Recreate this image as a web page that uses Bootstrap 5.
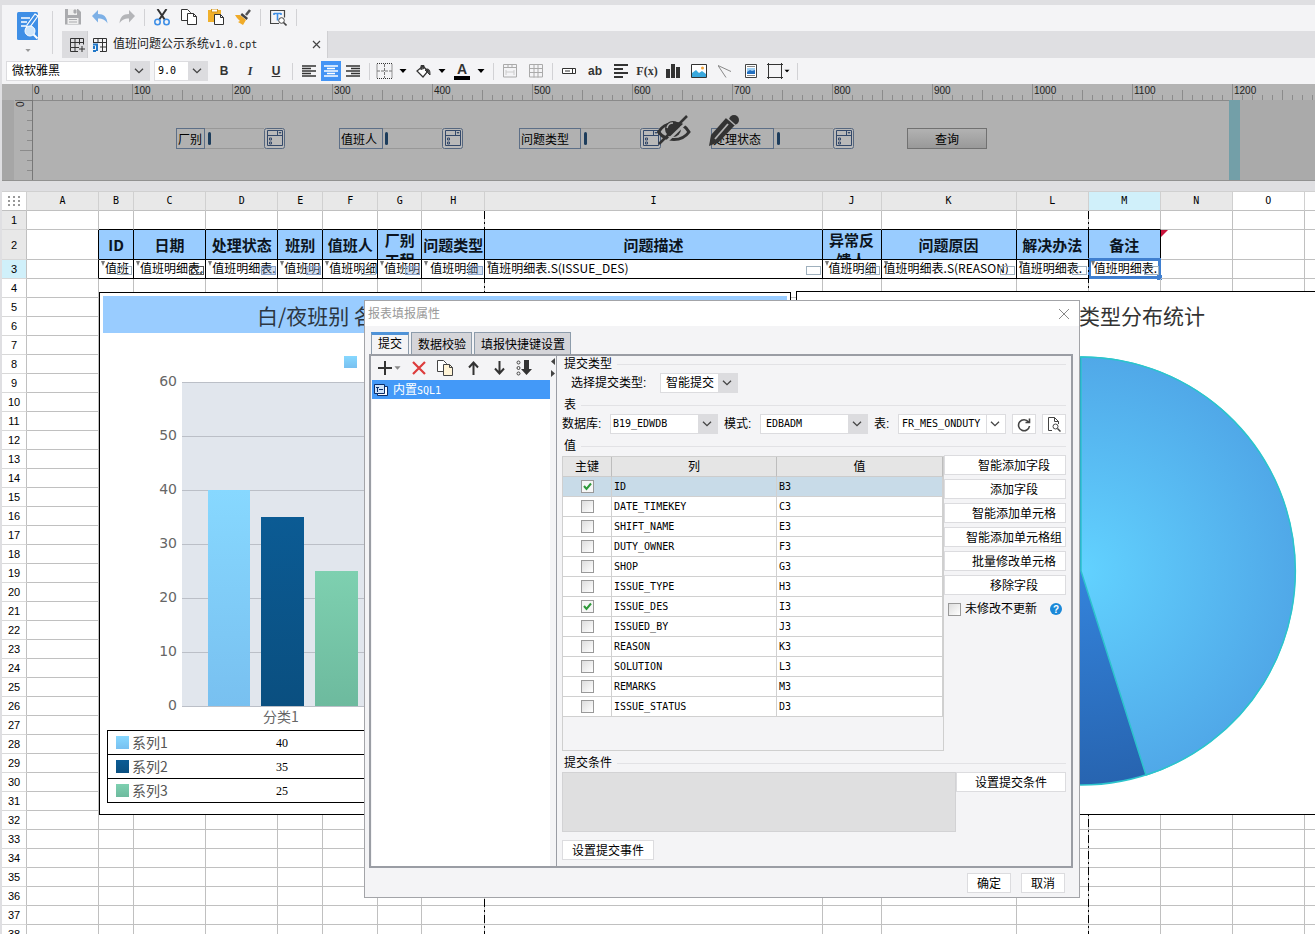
<!DOCTYPE html>
<html lang="zh-CN">
<head>
<meta charset="utf-8">
<meta name="viewport" content="width=device-width, initial-scale=1">
<title>值班问题公示系统v1.0.cpt</title>
<link href="https://cdn.jsdelivr.net/npm/bootstrap@5.3.0/dist/css/bootstrap.min.css" rel="stylesheet">
<style>
:root{--face:#f4f4f6;--edge:#dcdcdf;--grid:#c0c0c0;--blue:#4394f5;
 --mono:"DejaVu Sans Mono","Noto Sans CJK SC",monospace;--ui:"Liberation Sans","Noto Sans CJK SC",sans-serif}
html,body{height:100%;overflow:hidden}
body{font:12px/16px var(--ui);color:#000;background:#dfdfe2}
svg{display:block;flex:none}
button,select,input{font:inherit;color:inherit;border-radius:0}
button{background:none;border:0;padding:0}
.m10{font-family:var(--mono);font-size:10px}
.app{padding:5px 0 0 2px}
.appbar{background:var(--face)}
.logo{width:51px;padding-top:7px}
.logo:after{content:"";position:absolute;right:0;top:6px;bottom:4px;width:1px;background:#d4d4d7}
.quick{height:26px;gap:11px;padding:0 0 2px 12px}
.rule-v{width:1px;height:17px;background:#d2d2d5;flex:none}
.quick .rule-v{margin:0 -2px}
.tabsrow{height:27px;margin-left:9px;background:#dfdfe2}
.newtab{width:26px;border-right:1px solid #cfcfd2;background:#dcdcdf}
.doctab{width:240px;gap:6px;padding:0 6px 0 5px;background:var(--face);border-right:1px solid #cfcfd2;color:#222}
.fmt{height:26px;gap:6px;padding-left:4px;background:var(--face)}
.tool{width:20px;height:20px;display:flex;align-items:center;justify-content:center;color:#333;flex:none}
.tool.on{background:var(--blue);color:#fff}
.split{width:33px;height:20px;display:flex;align-items:center;gap:6px;color:#333;flex:none}
.combo{appearance:none;height:20px;border:1px solid var(--edge);padding:0 22px 0 5px;line-height:16px;outline:0;
 background:url("data:image/svg+xml,%3Csvg xmlns='http://www.w3.org/2000/svg' width='10' height='6'%3E%3Cpath d='M1 .7l4 4 4-4' fill='none' stroke='%23444' stroke-width='1.3'/%3E%3C/svg%3E") no-repeat right 5px center,linear-gradient(#dcdcdf,#dcdcdf) no-repeat right/19px 100%,#fff}
.combo.plain{background-size:auto,1px 100%;background-position:right 5px center,right 18px top}
.ruler{height:16px;background:#b4b4b4}
.canvas{height:81px;background:#b1b1b1;border-bottom:1px solid #929292}
.canvas .guide{left:1227px;width:11px;top:0;bottom:0;background:#739fa8}
.canvas .rest{left:1238px;right:0;top:0;bottom:0;background:#aaa}
.field{position:absolute;top:28px;height:21px;display:flex}
.field label{border:1px solid #5d6f87;padding:3px 0 0 1px;white-space:nowrap;overflow:hidden}
.field input{border:1px solid #989898;border-width:1px 0;background:none;width:59px;outline:0}
.field i{position:absolute;top:4px;width:3px;height:13px;border-radius:2px;background:#1d3d5c}
.field.f1{left:174px}.field.f2{left:337px}.field.f3{left:517px}.field.f4{left:709px}
.f1 label{width:29px}.f2 label{width:44px}.f3 label{width:62px}.f4 label{width:63px}
.f1 i{left:32px}.f2 i{left:46px}.f3 i{left:65px}.f4 i{left:66px}
.query{position:absolute;left:905px;top:28px;width:80px;height:21px;padding-top:2px;border:1px solid #717171;background:linear-gradient(#b2b2b2,#999)}
.sheet{margin-top:10px;background:#fff}
.cells{table-layout:fixed;width:1374px;border-collapse:separate;border-spacing:0}
.cells th,.cells td{border:solid var(--grid);border-width:0 1px 1px 0;padding:0;height:19px;line-height:18px;text-align:center;font-weight:400;overflow:hidden;white-space:nowrap;position:relative}
.cells thead th{height:20px;background:#e8e8e8;border-color:#d0d0d0 #d0d0d0 #c0c0c0;border-top-width:1px;font:10px/18px "DejaVu Sans Mono",monospace}
.cells tbody th{font-size:11px;font-family:"Liberation Sans",sans-serif;border-bottom-color:#d8d8d8}
.cells .dim{background:#e8e8e8}
.cells thead .blank{background:#fff}
.cells thead .hot,.cells tbody .hot{background:#d0f0fa}
.cells .kb{border-bottom-color:#000}.cells .kr{border-right-color:#000}
.cells .cap{height:30px;padding:0;background:#9cf;font:bold 15px/29px "Noto Sans CJK SC",sans-serif;color:#0c1420;border-color:#000}
.cap div{height:29px;overflow:hidden}
.cap .two{line-height:20px}
.cells .bind{border-color:#000;text-align:left;padding-left:6px;line-height:16px;vertical-align:top;font-family:"Noto Sans CJK SC",sans-serif}
.cells .bind.tight{padding-left:2px}
.cells .bind.wide{padding-left:8px}
.bind:before{content:"";position:absolute;left:2px;top:1px;border:solid transparent;border-width:5px 2px 0;border-top-color:#777}
.bind:after{content:"";position:absolute;right:1px;bottom:3px;width:15px;height:9px;border:1px solid #9fb0bd}
.bind.drop:after{background:#7f9fd055;border-color:#8aa4cc}
.bind.date:after{border-color:#555;background:repeating-linear-gradient(90deg,#666 0 2px,transparent 2px 4px) 2px 5px/10px 2px no-repeat}
.cells .flag{overflow:visible}
.flag:before{content:"";position:absolute;left:0;top:0;border:solid transparent;border-width:0 7px 7px 0;border-top:7px solid #c8143c;border-bottom:0}
.cells .picked{overflow:visible;padding-left:5px}
.pick{position:absolute;left:-1px;right:-1px;top:-2px;bottom:-1px;border:3px solid #3f7fd0}
.pick:after{content:"";position:absolute;right:-4px;bottom:-4px;width:5px;height:5px;background:#3f7fd0}
.pagebrk{position:absolute;top:20px;bottom:0;width:1px;background:repeating-linear-gradient(#000 0 8px,transparent 8px 11px,#000 11px 13px,transparent 13px 16px)}
.brk1{left:482px}.brk2{left:1086px}
.chart{position:absolute;background:#fff;border:1px solid #000;padding:3px}
.chart1{left:97px;top:101px;width:692px;height:523px}
.chart2{left:794px;top:100px;width:650px;height:524px}
.ctitle{font:21px/37px "Noto Sans CJK SC",sans-serif;height:37px;color:#333}
.chart1 .ctitle{background:#9cf;padding:1px 0 0 154px;color:#2b3642}
.chart2 .ctitle{text-align:center;padding-top:2px}
.series{width:calc(100% - 8px);margin:0 4px;border-collapse:collapse;table-layout:fixed}
.series td,.series th{height:24px;border:solid #000;border-width:1px 0;padding:0}
.series tr>:first-child{border-left-width:1px}
.series th{width:148px;padding:0 0 2px 8px;font:14px/20px "Noto Sans CJK SC",sans-serif;color:#555}
.series .num{font:12px/20px "Liberation Serif",serif;width:53px;text-align:center}
.swatch{width:13px;height:13px;margin:2px 3px 0 0}
.dlg{position:absolute;left:364px;top:300px;width:716px;height:598px;background:var(--face);border:1px solid #a3a4a8}
.dlghead{height:25px;background:#fff;color:#999;padding:0 9px 0 3px}
.dlgtabs{height:22px;margin:6px 0 0 6px;gap:2px}
.dlgtabs button{border:1px solid #8d9cab;border-bottom:0;background:#d5d5d9;padding:3px 5px 0 6px}
.dlgtabs .on{background:var(--face);border-top:3px solid #4f93d8;padding:0 6px 2px}
.pane{margin:0 6px 0 4px;height:514px;border:2px solid #9a9da4}
.side{width:179px}
.sidebar-tools{height:24px;gap:11px;padding-left:7px}
.src{background:#fff;border-left:1px solid var(--face)}
.src a{display:flex;align-items:center;gap:5px;height:19px;padding:1px 0 0 2px;background:#4399f8;color:#fff;text-decoration:none}
.splitter{width:7px;border-right:1px solid #9a9da4}
.form{padding:0 5px 0 5px}
.grp{height:16px;margin:4px 0 1px;gap:5px;padding-left:2px}
.grp:first-child{margin-top:0}
.grp:after{content:"";flex:1;height:1px;background:#e2e2e5}
.line{height:20px}
.wbtn{height:20px;border:1px solid var(--edge);padding-top:1px;background:#fff;white-space:nowrap}
.fieldbox{width:382px;height:295px;margin-top:1px;border:1px solid #cfcfcf}
.fieldbox table{width:100%;table-layout:fixed;border-collapse:separate;border-spacing:0}
.fieldbox th{height:20px;background:#e5e5e5;font-weight:400;text-align:center;border-right:1px solid #bdbdbd;border-bottom:1px solid #ccc;padding:0}
.fieldbox td{height:20px;background:#fff;border:solid #d0d0d0;border-width:0 1px 1px 0;padding:0 0 0 2px;line-height:16px}
.fieldbox .cur td{background:#c8dbe8}
.tick{appearance:none;display:block;width:13px;height:13px;margin:0;border:1px solid #999;background:linear-gradient(135deg,#ddd,#fff);flex:none}
td .tick{margin-left:16px}
.tick:checked{background:url("data:image/svg+xml,%3Csvg xmlns='http://www.w3.org/2000/svg' width='11' height='11'%3E%3Cpath d='M2 5l2.500 3L9 2.500' fill='none' stroke='%232f9a3a' stroke-width='2'/%3E%3C/svg%3E") center no-repeat,#f6f6f6}
.acts{width:122px;gap:4px}
.acts .wbtn{padding-left:18px}
.cond{height:60px}
.cond textarea{flex:1;background:#dfdfe0;border:1px solid #d2d2d4;resize:none;display:block}
</style>
</head>
<body class="d-flex flex-column">
<svg width="0" height="0" class="position-absolute">
 <symbol id="car" viewBox="0 0 8 4"><path d="M.5 0h7L4 4z"/></symbol>
 <symbol id="widget" viewBox="0 0 21 21"><rect x=".5" y=".5" width="20" height="20" rx="2" fill="#b9b9b9" stroke="#56677f"/><path d="M3.500 2.500h15v15h-15zM3.500 7.500h15M13.500 2.500v5M5.500 10h2v2h-2zM5.500 14h2v2h-2z" fill="none" stroke="#34496a"/><path d="M14.500 4h3l-1.500 2z" fill="#34496a"/></symbol>
</svg>
<div class="app d-flex flex-column flex-grow-1 position-relative">
 <header class="appbar d-flex">
  <button class="logo position-relative d-flex flex-column align-items-center" aria-label="FineReport">
   <svg width="24" height="29" viewBox="0 0 24 29"><rect x="1" y="0" width="21" height="28" rx="1.500" fill="#3f8fe6"/><path d="M5 6h9M5 10h6M5 14h5" stroke="#fff" stroke-width="1.500"/><path d="M19 2l3 2-8 11-4 2 1-4z" fill="#3f8fe6" stroke="#fff" stroke-width="1.200"/><circle cx="14" cy="19" r="5" fill="#cfe6fb" stroke="#fff"/><path d="M17.500 22.500l4 4" stroke="#fff" stroke-width="2"/></svg>
   <svg width="6" height="8" viewBox="0 -4 8 8" class="mt-1" fill="#999"><path d="M.5 0h7L4 4z"/></svg>
  </button>
  <div class="flex-grow-1">
   <div class="quick d-flex align-items-center">
    <button aria-label="保存"><svg width="16" height="16" viewBox="0 0 16 16"><path d="M0 0h13l3 3v12.500H0z" fill="#aaabae"/><path d="M3 0h9v6H3zM2.500 9h11v6h-11z" fill="#eee"/><path d="M9 1h2v3H9zM4 10.500h8M4 13h8" fill="#aaabae" stroke="#aaabae"/></svg></button>
    <button aria-label="撤销"><svg width="16" height="16" viewBox="0 0 16 16"><path d="M6 1v4c6 0 9 3 9.500 9.500C13.500 11 11 9.500 6 9.500v4L0 7z" fill="#7db0e6"/></svg></button>
    <button aria-label="重做"><svg width="16" height="16" viewBox="0 0 16 16"><path d="M10 1v4C4 5 1 8 .5 14.500 2.500 11 5 9.500 10 9.500v4L16 7z" fill="#b4b5b8"/></svg></button>
    <span class="rule-v"></span>
    <button aria-label="剪切"><svg width="16" height="17" viewBox="0 0 16 17"><path d="M3.500 0l7.500 11M12.500 0L5 11" stroke="#333" stroke-width="2"/><circle cx="3.500" cy="13" r="2.700" fill="none" stroke="#3f8fe6" stroke-width="1.600"/><circle cx="12.500" cy="13" r="2.700" fill="none" stroke="#3f8fe6" stroke-width="1.600"/></svg></button>
    <button aria-label="复制"><svg width="16" height="16" viewBox="0 0 16 16" fill="#fff" stroke="#333"><path d="M.5.5h6l3 3v8h-9z"/><path d="M6.500 4.500h6l3 3v8h-9z"/><path d="M12.500 4.500v3h3" fill="none"/></svg></button>
    <button aria-label="粘贴"><svg width="16" height="16" viewBox="0 0 16 16"><path d="M0 1h13v12H0z" fill="#f0b02c"/><path d="M3.500 0h6v3h-6z" fill="#fff" stroke="#d2951c"/><path d="M6.500 5.500h6l3 3v7h-9z" fill="#fff" stroke="#333"/><path d="M12.500 5.500v3h3" fill="none" stroke="#333"/></svg></button>
    <button aria-label="格式刷"><svg width="16" height="16" viewBox="0 0 16 16"><path d="M15 1l-4 5" stroke="#555" stroke-width="2.500"/><path d="M7 4l6 5-1.500 2-6-5z" fill="#444"/><path d="M0 6h5l6 5-3 5-5-3 2-1-3-3z" fill="#f0ab28"/></svg></button>
    <span class="rule-v"></span>
    <button aria-label="预览"><svg width="17" height="17" viewBox="0 0 17 17" fill="none"><path d="M9 14.500H.5v-13h14v7" stroke="#444" stroke-width="1.200"/><path d="M4 4.500h7M7.500 4.500v7M4 4v2M11 4v2" stroke="#3f8fe6" stroke-width="1.600"/><circle cx="11.500" cy="11.500" r="2.800" fill="#fff" stroke="#444"/><path d="M13.500 13.500l3 3" stroke="#444" stroke-width="1.600"/></svg></button>
    <span class="rule-v"></span>
   </div>
   <nav class="tabsrow d-flex">
    <button class="newtab d-flex align-items-center justify-content-end" style="padding-right:2px" aria-label="新建"><svg width="15" height="14" viewBox="0 0 15 14" fill="none" stroke="#333"><path d="M9 9.500H.5v-9h13v6M.5 4.500h13M5 .5v13M9.500.5v6M.5 9.500v4H8M12 8v6M9 11h6"/></svg></button>
    <div class="doctab d-flex align-items-center">
     <svg width="14" height="14" viewBox="0 0 14 14" fill="none" stroke="#333"><path d="M.5 5V.5h13v13H7M.5 4.500h13M5 .5v4M9.500.5v13M7 9h7"/><path d="M0 6.500h5M4 6v7M0 13h3M1 8v3" stroke="#2278c8" stroke-width="2"/></svg>
     <a href="#" class="text-reset text-decoration-none text-nowrap">值班问题公示系统<span class="m10">v1.0.cpt</span></a>
     <button class="ms-auto" aria-label="关闭标签"><svg width="9" height="9" viewBox="0 0 9 9"><path d="M1 1l7 7M8 1L1 8" stroke="#444" stroke-width="1.200"/></svg></button>
    </div>
   </nav>
  </div>
 </header>
 <div class="fmt d-flex align-items-center" role="toolbar" aria-label="格式">
  <div class="d-flex gap-1">
   <select class="combo" style="width:144px" aria-label="字体"><option>微软雅黑</option></select>
   <select class="combo m10" style="width:54px;padding-left:3px" aria-label="字号"><option>9.0</option></select>
  </div>
  <button class="tool fw-bold">B</button>
  <button class="tool fst-italic fw-bold" style="font-family:Liberation Serif">I</button>
  <button class="tool fw-bold text-decoration-underline">U</button>
  <span class="rule-v"></span>
  <div class="d-flex" style="gap:2px">
   <button class="tool" aria-label="左对齐"><svg width="14" height="12"><path d="M0 1h14M0 3.500h9M0 6h14M0 8.500h9M0 11h14" stroke="currentColor" stroke-width="1.300"/></svg></button>
   <button class="tool on" aria-label="居中"><svg width="14" height="12"><path d="M0 1h14M3 3.500h8M0 6h14M3 8.500h8M0 11h14" stroke="currentColor" stroke-width="1.300"/></svg></button>
   <button class="tool" aria-label="右对齐"><svg width="14" height="12"><path d="M0 1h14M5 3.500h9M0 6h14M5 8.500h9M0 11h14" stroke="currentColor" stroke-width="1.300"/></svg></button>
  </div>
  <span class="rule-v"></span>
  <button class="split" aria-label="边框"><svg width="17" height="16" fill="none" stroke="#333"><path d="M1 .5h15v15H1z" stroke-dasharray="1 1"/><path d="M8.500 1v14M1 8h15" stroke-dasharray="3 1" stroke="#777"/></svg><svg width="8" height="4"><use href="#car"/></svg></button>
  <button class="split" aria-label="背景色"><svg width="17" height="14" viewBox="0 0 17 14"><path d="M2 7l6-5 5 5-5 6z" fill="#fff" stroke="#333" stroke-width="1.200"/><path d="M6 6V1.500h3V5M12 5c3 0 3 3 3 6-2-2-3-3-5-5z" fill="#333" stroke="#333" fill-opacity=".8"/></svg><svg width="8" height="4"><use href="#car"/></svg></button>
  <button class="split" aria-label="字体颜色"><svg width="17" height="17"><text x="8" y="11" text-anchor="middle" font-family="Liberation Sans" font-weight="bold" font-size="14" fill="#333">A</text><path d="M0 13h16v4H0z"/></svg><svg width="8" height="4"><use href="#car"/></svg></button>
  <span class="rule-v"></span>
  <button class="tool" aria-label="合并"><svg width="14" height="14" fill="none" stroke="#aaa"><path d="M.5.5h13v12.500H.5zM.5 3.500h13M5 .5v3M9 .5v3"/><path d="M3 8h8M3 6v5M11 6v5" stroke="#ccc"/></svg></button>
  <button class="tool" aria-label="拆分"><svg width="14" height="14" fill="none" stroke="#aaa"><path d="M.5.5h13v12.500H.5zM.5 4.500h13M.5 8.500h13M5 .5v13M9 .5v13"/></svg></button>
  <span class="rule-v"></span>
  <button class="tool" aria-label="控件"><svg width="14" height="6" fill="#fff" stroke="#333"><path d="M.5.5h13v5H.5z"/><path d="M3 3h5M10.500 1v4"/></svg></button>
  <button class="tool fw-bold">ab</button>
  <button class="tool" aria-label="段落"><svg width="14" height="14"><path d="M0 1h14M0 5h9M0 9h14M0 13h9" stroke="#333" stroke-width="1.800"/></svg></button>
  <button class="tool" style="font:bold 12px Liberation Serif">F(x)</button>
  <button class="tool" aria-label="图表"><svg width="14" height="14" fill="#333"><path d="M0 5h4v9H0zM5 0h4v14H5zM10 3h4v11h-4z"/></svg></button>
  <button class="tool" aria-label="图片"><svg width="16" height="14"><path d="M.5.5h15v13H.5z" fill="#fff" stroke="#333"/><path d="M1 13V9l4-3 3 3 3-2 4 3v3z" fill="#3aa8dc"/><circle cx="11.500" cy="4" r="1.500" fill="#f2a33a"/></svg></button>
  <button class="tool" aria-label="斜线"><svg width="14" height="13" fill="none" stroke="#888"><path d="M0 .5l13 6M0 .5l8 12"/></svg></button>
  <button class="tool" aria-label="子报表"><svg width="12" height="14"><path d="M.5.5h11v13H.5z" fill="#fff" stroke="#444"/><path d="M2 2.500h8M2 11.500h8" stroke="#888"/><path d="M2 4h8v6H2z" fill="#9fd0f5"/><path d="M2 10V8l3-2 2 1 3-1v4z" fill="#2470c0"/></svg></button>
  <button class="split" aria-label="悬浮元素" style="gap:1px;width:24px"><svg width="16" height="16" fill="none" stroke="#333"><path d="M0 1.500h16M0 14.500h16M1.500 0v16M14.500 0v16"/></svg><svg width="6" height="4" viewBox="0 0 8 4"><use href="#car"/></svg></button>
  <span class="rule-v"></span>
 </div>
 <svg class="ruler w-100" height="16" id="ruler" font-family="Liberation Sans" font-size="10" fill="#222">
  <defs><pattern id="ticks" x="30" width="100" height="16" patternUnits="userSpaceOnUse"><path d="M.5 0v16M50.500 6v10M10.500 11v5M20.500 11v5M30.500 11v5M40.500 11v5M60.500 11v5M70.500 11v5M80.500 11v5M90.500 11v5" stroke="#8b8b8b"/></pattern></defs>
  <rect width="100%" height="16" fill="#b3b3b3"/><rect x="30" width="100%" height="16" fill="url(#ticks)"/>
 </svg>
 <div class="canvas position-relative">
  <svg width="31" height="80" stroke="#8b8b8b" fill="none"><path d="M0 0h12v80H0z" fill="#a6a6a6" stroke="none"/><path d="M13 .5h18M30.500 0v80" stroke="#777"/><path d="M25 10.500h5M25 20.500h5M25 30.500h5M25 40.500h5M18 50.500h12M25 60.500h5M25 70.500h5"/><text transform="translate(22 7) rotate(-90)" font-size="10" font-family="Liberation Sans" fill="#222" stroke="none">0</text></svg>
  <svg class="position-absolute top-0" style="left:31px" width="1198" height="1"><path d="M0 .5h1198" stroke="#8a8a8a"/></svg>
  <div class="field f1"><label for="w1">厂别</label><input id="w1"><i></i><svg width="21" height="21"><use href="#widget"/></svg></div>
  <div class="field f2"><label for="w2">值班人</label><input id="w2"><i></i><svg width="21" height="21"><use href="#widget"/></svg></div>
  <div class="field f3"><label for="w3">问题类型</label><input id="w3"><i></i><svg width="21" height="21"><use href="#widget"/></svg></div>
  <div class="field f4"><label for="w4">处理状态</label><input id="w4"><i></i><svg width="21" height="21"><use href="#widget"/></svg></div>
  <svg class="position-absolute" style="left:655px;top:14px" width="84" height="34" viewBox="0 0 84 34"><path d="M1.500 18C8 7 25 6 32 18 25 28 9 28 1.500 18z" fill="none" stroke="#333" stroke-width="3"/><circle cx="16" cy="15" r="8" fill="#333"/><path d="M10 14q1-5 6-5" stroke="#b1b1b1" stroke-width="1.500" fill="none"/><path d="M5 32L33 5" stroke="#b1b1b1" stroke-width="2.500"/><path d="M2 30L30 2" stroke="#333" stroke-width="2.500"/>
  <path d="M52 32l2-11L69 4l9 7-16 17z" fill="#333"/><circle cx="77" cy="6" r="5" fill="#333"/><path d="M69 3l9 8" stroke="#b1b1b1" stroke-width="1.500"/><path d="M58 25L71 10" stroke="#b1b1b1" stroke-width="1.800"/></svg>
  <button class="query">查询</button>
  <div class="guide position-absolute"></div><div class="rest position-absolute"></div>
 </div>
 <main class="sheet flex-grow-1 position-relative overflow-hidden">
  <table class="cells" id="cells"></table>
  <div class="pagebrk brk1"></div><div class="pagebrk brk2"></div>
  <section class="chart chart1">
   <div class="ctitle">白/夜班别 各</div>
   <svg width="684" height="397" viewBox="103 333 684 397" font-family="DejaVu Sans" font-size="14" fill="#666">
    <defs><linearGradient id="g1" x2="0" y2="1"><stop stop-color="#87d8ff"/><stop offset="1" stop-color="#78c0f0"/></linearGradient><linearGradient id="g2" x2="0" y2="1"><stop stop-color="#0b5b94"/><stop offset="1" stop-color="#0a4f80"/></linearGradient><linearGradient id="g3" x2="0" y2="1"><stop stop-color="#7ed0b0"/><stop offset="1" stop-color="#6dba9e"/></linearGradient></defs>
    <rect x="344" y="356" width="13" height="12" fill="url(#g1)"/>
    <rect x="182" y="382" width="590" height="324" fill="#e1e6ed"/>
    <path d="M182 382.500h590M182 436.500h590M182 490.500h590M182 544.500h590M182 598.500h590M182 652.500h590M182 706.500h590" stroke="#bbbfc7"/>
    <g text-anchor="end"><text x="177" y="386">60</text><text x="177" y="440">50</text><text x="177" y="494">40</text><text x="177" y="548">30</text><text x="177" y="602">20</text><text x="177" y="656">10</text><text x="177" y="710">0</text></g>
    <rect x="208" y="490" width="42" height="216" fill="url(#g1)"/><rect x="261" y="517" width="43" height="189" fill="url(#g2)"/><rect x="315" y="571" width="43" height="135" fill="url(#g3)"/>
    <text x="281" y="722" text-anchor="middle" font-family="Noto Sans CJK SC">分类1</text>
   </svg>
   <table class="series">
    <tr><th><span class="d-flex align-items-center"><svg class="swatch"><rect width="13" height="13" fill="url(#g1)"/></svg>系列1</span></th><td class="num">40</td><td></td></tr>
    <tr><th><span class="d-flex align-items-center"><svg class="swatch"><rect width="13" height="13" fill="url(#g2)"/></svg>系列2</span></th><td class="num">35</td><td></td></tr>
    <tr><th><span class="d-flex align-items-center"><svg class="swatch"><rect width="13" height="13" fill="url(#g3)"/></svg>系列3</span></th><td class="num">25</td><td></td></tr>
   </table>
  </section>
  <section class="chart chart2">
   <div class="ctitle">问题类型分布统计</div>
   <svg width="600" height="470" viewBox="800 332 600 470">
    <defs><radialGradient id="p1" gradientUnits="userSpaceOnUse" cx="1081" cy="571" r="215"><stop stop-color="#62d2ff"/><stop offset="1" stop-color="#50a8e8"/></radialGradient><radialGradient id="p2" gradientUnits="userSpaceOnUse" cx="1081" cy="571" r="215"><stop stop-color="#3484dc"/><stop offset="1" stop-color="#2764b0"/></radialGradient></defs>
    <g stroke="#2cc4cc" stroke-width="1.500"><circle cx="1081" cy="571" r="214" fill="url(#p2)"/><path d="M1081 571V357a214 214 0 0 1 65 418z" fill="url(#p1)"/></g>
   </svg>
  </section>
 </main>

 <section class="dlg" role="dialog" aria-label="报表填报属性">
  <div class="dlghead d-flex align-items-center justify-content-between">报表填报属性<button aria-label="关闭"><svg width="12" height="12"><path d="M1 1l10 10M11 1L1 11" stroke="#888"/></svg></button></div>
  <nav class="dlgtabs d-flex"><button class="on">提交</button><button>数据校验</button><button>填报快捷键设置</button></nav>
  <div class="pane d-flex">
   <div class="side d-flex flex-column">
    <div class="sidebar-tools d-flex align-items-center">
     <button class="d-flex align-items-center" aria-label="添加"><svg width="14" height="14"><path d="M0 7h14M7 0v14" stroke="#333" stroke-width="2"/></svg><svg style="margin-left:2px" width="7" height="4" viewBox="0 0 8 4"><path d="M.5 0h7L4 4z" fill="#888"/></svg></button>
     <button aria-label="删除"><svg width="14" height="14"><path d="M1 1l12 12M13 1L1 13" stroke="#dd3c3c" stroke-width="2.200"/></svg></button>
     <button aria-label="复制"><svg width="16" height="16" stroke="#444"><path d="M.5.5h6l3 3v8h-9z" fill="#fff"/><path d="M6.500 4.500h6l3 3v8h-9z" fill="#fff4d6"/><path d="M12.500 4.500v3h3" fill="none"/></svg></button>
     <button class="ps-1" aria-label="上移"><svg width="11" height="14" fill="none" stroke="#333" stroke-width="2"><path d="M5.500 14V2M1 6.500l4.500-5 4.500 5"/></svg></button>
     <button class="ps-1" aria-label="下移"><svg width="11" height="14" fill="none" stroke="#333" stroke-width="2"><path d="M5.500 0v12M1 7.500l4.500 5 4.500-5"/></svg></button>
     <button aria-label="排序"><svg width="16" height="16"><g fill="none" stroke="#444"><circle cx="2.500" cy="2.500" r="1.500"/><circle cx="2.500" cy="8" r="1.500"/><circle cx="2.500" cy="13.500" r="1.500"/></g><path d="M8 0h5v9h3l-5.500 6L5 9h3z" fill="#333"/></svg></button>
    </div>
    <div class="src flex-grow-1"><a href="#"><svg width="14" height="12"><path d="M3.500 2.500h10v9h-10z" fill="#fff" stroke="#0b2e6b"/><path d="M.5.500h10v9H.5z" fill="#cfe4fb" stroke="#0b2e6b"/><path d="M2 3.500h3M3.500 3v5M5 5.500h4" stroke="#0b2e6b"/></svg><span>内置<span class="m10">SQL1</span></span></a></div>
   </div>
   <div class="splitter"><svg width="6" height="22" fill="#444"><path d="M5 2v7L1 5.500zM1 14v7l4-3.500z"/></svg></div>
   <div class="form flex-grow-1">
    <div class="grp d-flex align-items-center">提交类型</div>
    <div class="line d-flex align-items-center" style="padding-left:9px"><label for="st" style="width:89px">选择提交类型:</label><select id="st" class="combo" style="width:78px"><option>智能提交</option></select></div>
    <div class="grp d-flex align-items-center">表</div>
    <div class="line d-flex align-items-center">
     <label for="db" style="width:48px">数据库:</label><select id="db" class="combo m10" style="width:108px;padding-left:2px"><option>B19_EDWDB</option></select>
     <label for="sc" style="width:42px;padding-left:6px">模式:</label><select id="sc" class="combo m10" style="width:108px"><option>EDBADM</option></select>
     <label for="tb" style="width:30px;padding-left:6px">表:</label><select id="tb" class="combo plain m10" style="width:108px;padding-left:3px"><option>FR_MES_ONDUTY</option></select>
     <button class="wbtn ms-auto d-flex align-items-center justify-content-center" style="width:24px" aria-label="刷新"><svg width="14" height="14" fill="none" stroke="#444" stroke-width="1.600"><path d="M11.500 4A5.500 5.500 0 1 0 12.500 8M12.500 .5v4h-4"/></svg></button>
     <button class="wbtn ms-auto d-flex align-items-center justify-content-center" style="width:24px" aria-label="预览数据"><svg width="14" height="15" fill="none" stroke="#444"><path d="M5 13.500H1.500v-13h6l4 4V7M7.500.5v4h4"/><circle cx="8.500" cy="9.500" r="2.500"/><path d="M10.500 11.500l3 3" stroke-width="1.500"/></svg></button>
    </div>
    <div class="grp d-flex align-items-center">值</div>
    <div class="d-flex justify-content-between">
     <div class="fieldbox"><table><colgroup><col style="width:49px"><col style="width:165px"><col></colgroup><thead><tr><th>主键</th><th>列</th><th>值</th></tr></thead><tbody id="fields"></tbody></table></div>
     <div class="acts d-flex flex-column">
      <button class="wbtn">智能添加字段</button><button class="wbtn">添加字段</button><button class="wbtn">智能添加单元格</button><button class="wbtn">智能添加单元格组</button><button class="wbtn">批量修改单元格</button><button class="wbtn">移除字段</button>
      <div class="line d-flex align-items-center ps-1"><input class="tick" type="checkbox" id="keep"><label class="ps-1" for="keep">未修改不更新</label><button class="ms-auto me-1" aria-label="帮助"><svg width="12" height="12"><circle cx="6" cy="6" r="6" fill="#1b88d8"/><text x="6" y="10" text-anchor="middle" font-family="Liberation Sans" font-weight="bold" font-size="10" fill="#fff">?</text></svg></button></div>
     </div>
    </div>
    <div class="grp d-flex align-items-center">提交条件</div>
    <div class="cond d-flex align-items-start"><textarea class="h-100" readonly aria-label="提交条件"></textarea><button class="wbtn" style="width:110px">设置提交条件</button></div>
    <button class="wbtn mt-2 d-block" style="width:92px">设置提交事件</button>
   </div>
  </div>
  <div class="d-flex justify-content-end" style="padding:5px 14px 0;gap:10px"><button class="wbtn" style="width:44px">确定</button><button class="wbtn" style="width:44px">取消</button></div>
 </section>
</div>
<script src="https://cdn.jsdelivr.net/npm/bootstrap@5.3.0/dist/js/bootstrap.bundle.min.js"></script>
<script>
// Ruler labels every 100 units
const ruler = document.getElementById('ruler');
for (let v = 0; v <= 1200; v += 100)
  ruler.insertAdjacentHTML('beforeend', `<text x="${v + 32}" y="10">${v}</text>`);

// Spreadsheet grid
const widths = [72,35,72,72,45,55,44,63,337,59,135,72,72,72,72,71];
const caps = {B:'ID',C:'日期',D:'处理状态',E:'班别',F:'值班人',G:'厂别<br>工程',H:'问题类型',I:'问题描述',J:'异常反<br>馈人',K:'问题原因',L:'解决办法',M:'备注'};
const binds = {B:['值班',''],C:['值班明细表.','date'],D:['值班明细表.','drop'],E:['值班明','drop'],F:['值班明细',''],G:['值班明','drop'],H:['值班明细','drop wide'],I:['值班明细表.S(ISSUE_DES)','tight'],J:['值班明细',''],K:['值班明细表.S(REASON)','tight'],L:['值班明细表.','tight'],M:['值班明细表.','picked']};
const cols = [...'ABCDEFGHIJKLMNOP'];
let html = '<colgroup><col style="width:25px">' + widths.map(w => `<col style="width:${w}px">`).join('') + '</colgroup>';
html += '<thead><tr><th class="blank"><svg class="m-auto" width="12" height="11" fill="#999"><path d="M0 0h2v2H0zM5 0h2v2H5zM10 0h2v2h-2zM0 4h2v2H0zM5 4h2v2H5zM10 4h2v2h-2zM0 8h2v2H0zM5 8h2v2H5zM10 8h2v2h-2z"/></svg></th>'
  + cols.map(c => `<th class="${c === 'M' ? 'hot' : c > 'N' ? 'blank' : ''}">${c}</th>`).join('') + '</tr></thead><tbody>';
for (let r = 1; r <= 38; r++) {
  html += `<tr><th class="${r < 3 ? 'dim' : r === 3 ? 'hot' : ''}">${r}</th>`;
  for (const c of cols) {
    if (r === 1) html += `<td class="${caps[c] ? 'kb' : ''}"></td>`;
    else if (r === 2 && caps[c]) html += `<td class="cap"><div class="${caps[c].includes('<br>') ? 'two' : ''}">${caps[c]}</div></td>`;
    else if (r === 3 && binds[c]) html += `<td class="bind ${binds[c][1]}">${binds[c][0]}${c === 'M' ? '<span class="pick"></span>' : ''}</td>`;
    else html += `<td class="${r > 1 && r < 4 && c === 'A' ? 'kr' : ''}${r === 2 && c === 'N' ? 'flag' : ''}"></td>`;
  }
  html += '</tr>';
}
document.getElementById('cells').innerHTML = html + '</tbody>';

// Column mapping of the submit dialog
const fields = [['ID','B3',1],['DATE_TIMEKEY','C3'],['SHIFT_NAME','E3'],['DUTY_OWNER','F3'],['SHOP','G3'],['ISSUE_TYPE','H3'],['ISSUE_DES','I3',1],['ISSUED_BY','J3'],['REASON','K3'],['SOLUTION','L3'],['REMARKS','M3'],['ISSUE_STATUS','D3']];
document.getElementById('fields').innerHTML = fields.map((f, i) =>
  `<tr class="${i ? '' : 'cur'}"><td><input class="tick" type="checkbox" aria-label="${f[0]}" ${f[2] ? 'checked' : ''}></td><td class="m10">${f[0]}</td><td class="m10">${f[1]}</td></tr>`).join('');
</script>
</body>
</html>
